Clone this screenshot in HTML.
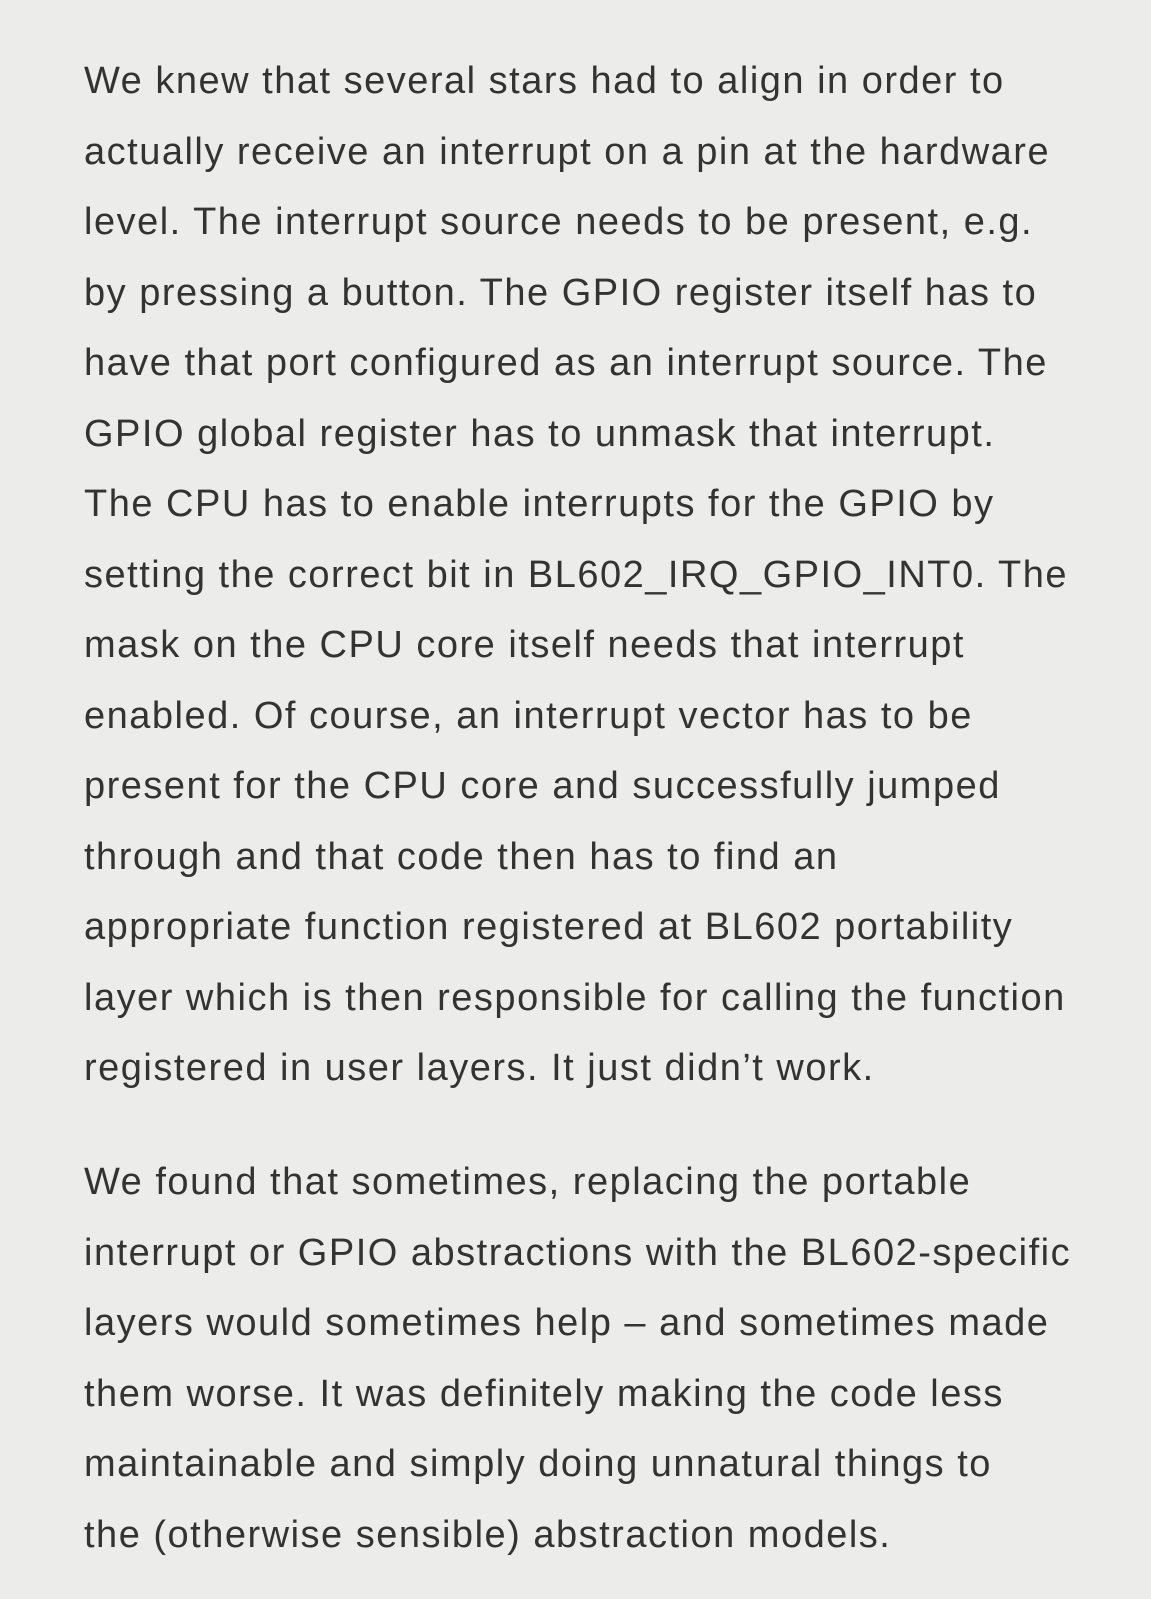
<!DOCTYPE html>
<html><head><meta charset="utf-8"><style>
html,body{margin:0;padding:0;}
body{width:1151px;height:1599px;background:#ececeb;overflow:hidden;font-family:"Liberation Sans",sans-serif;color:#333;}
.p{position:absolute;left:84px;font-size:38px;letter-spacing:1.5px;line-height:70.5px;white-space:nowrap;}
</style></head><body>
<div class="p" style="top:46px">
We knew that several stars had to align in order to<br>
actually receive an interrupt on a pin at the hardware<br>
level. The interrupt source needs to be present, e.g.<br>
by pressing a button. The GPIO register itself has to<br>
have that port configured as an interrupt source. The<br>
GPIO global register has to unmask that interrupt.<br>
The CPU has to enable interrupts for the GPIO by<br>
setting the correct bit in BL602_IRQ_GPIO_INT0. The<br>
mask on the CPU core itself needs that interrupt<br>
enabled. Of course, an interrupt vector has to be<br>
present for the CPU core and successfully jumped<br>
through and that code then has to find an<br>
appropriate function registered at BL602 portability<br>
layer which is then responsible for calling the function<br>
registered in user layers. It just didn’t work.
</div>
<div class="p" style="top:1147px">
We found that sometimes, replacing the portable<br>
interrupt or GPIO abstractions with the BL602-specific<br>
layers would sometimes help – and sometimes made<br>
them worse. It was definitely making the code less<br>
maintainable and simply doing unnatural things to<br>
the (otherwise sensible) abstraction models.
</div>
</body></html>
